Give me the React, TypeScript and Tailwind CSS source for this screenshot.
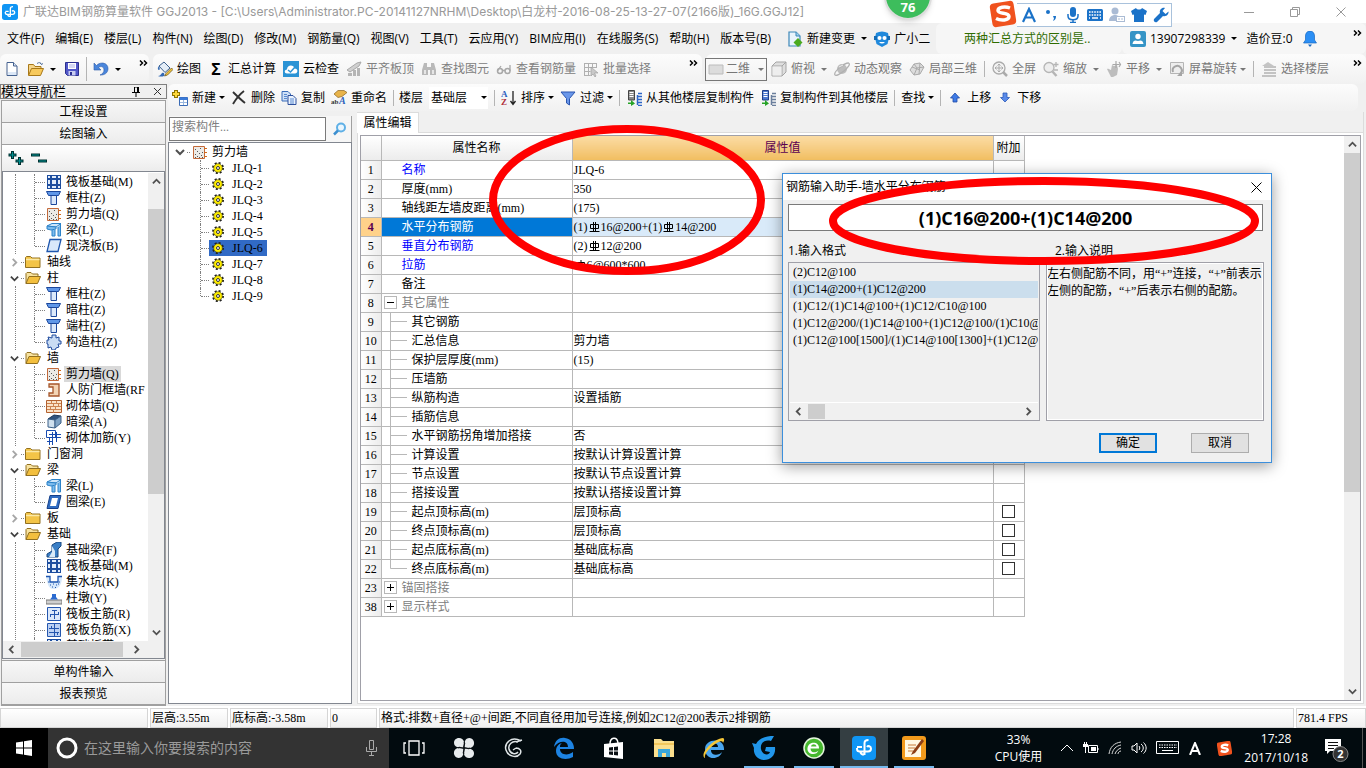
import React from 'react';

interface IconProps {
  name: string;
  size?: string;
}

interface Row {
  no: number;
  name: string;
  value?: string;
  kind?: 'link' | 'group' | 'child';
  open?: boolean;
  last?: boolean;
  check?: boolean;
}

interface TreeGroup {
  name: string;
  open: boolean;
  items: { icon: string; name: string; active?: boolean }[];
}

const UI = "font-['Open_Sans','Noto_Sans_CJK_SC',sans-serif]";
const SONG = "font-['Liberation_Serif','Noto_Sans_CJK_SC',serif]";

// 16x16 drawings for the bars and the trees
const icons: Record<string, React.ReactNode> = {
  doc: (
    <>
      <path d="M3 1.500h6.500L13 5v9.500H3z" fill="#fff" stroke="#44618f" />
      <path d="M9.500 1.500V5H13" fill="#dbe6f5" stroke="#44618f" />
      <path d="M4 11h8v3H4z" fill="#dce8f7" />
    </>
  ),
  open: (
    <>
      <path d="M.5 14V3.500h5l1.500 2h6V8" fill="#f5d58a" stroke="#a87818" />
      <path d="M.5 14.500 3.500 7.500h12l-3 7z" fill="#f7c95c" stroke="#a87818" />
      <path d="M9 2.500c2-1.500 4-1 4.500 1l1.500-1M13.500 3.500 12 2" fill="none" stroke="#53729d" />
    </>
  ),
  save: (
    <>
      <path d="M1.500 1.500h13v13h-11l-2-2z" fill="#5157c8" stroke="#2b2f8f" />
      <path d="M4 2h8v6H4z" fill="#fff" />
      <path d="M5 4h6M5 6h6" stroke="#a9afe8" />
      <path d="M4.500 10h7v4.500h-7z" fill="#c9cdf0" />
      <path d="M6 11h2v3H6z" fill="#2b2f8f" />
    </>
  ),
  undo: <path d="M1 2v7h7L5.500 6.500c3-2 5.500-.5 5.500 2.500 0 2.500-1.500 4-4 5 4.500.3 8-2 8-6.500C15 2 8 0 3.500 4.500z" fill="#4a86dc" stroke="#2c5aa8" strokeWidth=".6" />,
  bucket: (
    <>
      <path d="M2 5l5-4 6 6-5 4.500z" fill="#e4edf7" stroke="#3a5f8d" />
      <path d="M2 5C0 7 1 9 2 9s1-2 0-4" fill="#3a6fb5" />
      <path d="M14.500 7 9 12.500 7.500 15 10.500 14 16 8.500z" fill="#f2c23c" stroke="#5a4a1a" strokeWidth=".7" />
      <path d="M5 12c2-1 3 1 2 3-2 1-5 .5-6 0 2 0 3-2 4-3z" fill="#3369b5" />
    </>
  ),
  cloud: (
    <>
      <path d="M0 0h16v16H0z" fill="#2a93d5" />
      <path d="M4 12.500c-3 0-3-4 0-4 0-5 7-5 7.500-1 4 0 3.500 5 .5 5z" fill="#fff" />
      <path d="m5 9 2.500 2L12 6" fill="none" stroke="#2a93d5" strokeWidth="1.500" />
    </>
  ),
  slab: (
    <>
      <path d="M1 9 11 2l4-1-2 4-9 6z" fill="#d0d0d0" stroke="#a8a8a8" />
      <path d="M2 12h4v3H2zM7 9h3v6H7zM11 7h3v8h-3z" fill="#b5b5b5" />
    </>
  ),
  binocular: (
    <>
      <path d="M3 2h3v4h4V2h3l2 7v5H9V9H7v5H1V9z" fill="#b9b9b9" />
      <path d="M3 9h2v4H3zM11 9h2v4h-2z" fill="#e6e6e6" />
    </>
  ),
  glasses: (
    <>
      <circle cx="4" cy="10" r="2.500" fill="none" stroke="#a8a8a8" strokeWidth="1.500" />
      <circle cx="11.500" cy="10" r="2.500" fill="none" stroke="#a8a8a8" strokeWidth="1.500" />
      <path d="M6.500 9.500h2.500M1.500 10 5 5M14 10V4" stroke="#a8a8a8" strokeWidth="1.300" />
    </>
  ),
  batch: (
    <>
      <path d="M1.500 2.500h12M1.500 6.500h12M1.500 10.500h6M1.500 14.500h6M1.500 2v13M5.500 2v13M9.500 2v5M13.500 2v5" stroke="#b0b0b0" />
      <path d="M8 6v9l2-2 2 3 1-1-1.500-3H15z" fill="#c9c9c9" stroke="#999" strokeWidth=".6" />
    </>
  ),
  flat: <path d="M1 4h14v9H1z" fill="#dcdcdc" stroke="#bcbcbc" />,
  cube: (
    <>
      <path d="M1 5l4-4h10v10l-4 4H1z" fill="#dedede" stroke="#a5a5a5" />
      <path d="M1 5h10v10M11 5l4-4" fill="none" stroke="#a5a5a5" />
      <path d="M1.500 5.500h9v9h-9z" fill="#eee" />
    </>
  ),
  orbit: (
    <>
      <circle cx="8" cy="8" r="5" fill="#bdbdbd" />
      <path d="M1 14c-2-3 9-12 13.500-12 2.500 1-1 5-4 7.500C6 13 2 15.500 1 14z" fill="none" stroke="#b0b0b0" strokeWidth="1.300" />
      <path d="M5 6l4-2" stroke="#eee" />
    </>
  ),
  cube3: (
    <>
      <path d="m1 9 4-6 6-1 4 4-4 7-6 1z" fill="#ddd" stroke="#aaa" />
      <path d="m5 3 3 4-3 7M8 7l7-1M3 6l8 3M11 2l-1 11" fill="none" stroke="#aaa" />
    </>
  ),
  full: (
    <>
      <circle cx="7" cy="7" r="6" fill="#f3f3f3" stroke="#ababab" strokeWidth="1.300" />
      <path d="M7 3v8M3 7h8M5.500 4.500 7 3l1.500 1.500M5.500 9.500 7 11l1.500-1.500M4.500 5.500 3 7l1.500 1.500M9.500 5.500 11 7 9.500 8.500" fill="none" stroke="#ababab" />
      <path d="m11 11 4 4" stroke="#ababab" strokeWidth="2.500" />
    </>
  ),
  zoom: (
    <>
      <circle cx="6" cy="6.500" r="5" fill="#eee" stroke="#b5b5b5" strokeWidth="1.300" />
      <path d="m9.500 10.500 4 4.500" stroke="#b5b5b5" strokeWidth="2.500" />
      <path d="M13 1v5M10.500 3.500h5M11 9h4" stroke="#b5b5b5" strokeWidth="1.300" />
    </>
  ),
  pan: (
    <>
      <path d="M1 8c2-1 3 1 4 1l1-5 2 1 3-1 1 4-1 6-4 2H5z" fill="#bdbdbd" />
      <path d="M10 0v7M6.500 3.500h7M13 1l1.500 2.500L13 6" fill="none" stroke="#a8a8a8" strokeWidth="1.200" />
    </>
  ),
  rotate: (
    <>
      <path d="M1.500 1.500h13v11h-13z" fill="#eee" stroke="#b5b5b5" />
      <path d="M4 11a4.500 4.500 0 1 1 7 2" fill="none" stroke="#a5a5a5" strokeWidth="2" />
      <path d="M13 10v5H8z" fill="#a5a5a5" />
    </>
  ),
  floors: (
    <>
      <path d="M1 5 7 1l6 4z" fill="#c4c4c4" />
      <path d="M3 6h12M3 9h12M3 12h12M1 15h14" stroke="#b3b3b3" strokeWidth="1.700" />
    </>
  ),
  add: (
    <>
      <path d="M4 0v8M0 4h8" stroke="#8f7400" strokeWidth="4" />
      <path d="M4 1v6M1 4h6" stroke="#ffd83a" strokeWidth="2" />
      <path d="M7.500 7.500h8v8h-8z" fill="#fff" stroke="#3a6bb5" />
      <path d="M7.500 7.500h8v2.500h-8z" fill="#3a7ad8" />
      <path d="M8 12.500h7M11.500 10v5" stroke="#9ab8e0" />
    </>
  ),
  del: <path d="M2 2c3 3 7 7 12 11M13 1C9 4 5 9 2 14" fill="none" stroke="#333" strokeWidth="1.900" />,
  copy: (
    <>
      <path d="M1 1.500h6l2.500 2.500v7H1z" fill="#cfe0f7" stroke="#3b6cb8" />
      <path d="M7 5.500h5l3 3v6H7z" fill="#e8f1fd" stroke="#2c4f9c" />
      <path d="M3 4.500h3M3 6.500h3M3 8.500h3M9 9h4M9 11h4M9 13h4" stroke="#5a8ad0" />
    </>
  ),
  rename: (
    <>
      <path d="m3 4 4-3.500h6l3 2-5 4-4 1z" fill="#e8b34a" stroke="#8a6320" strokeWidth=".7" />
      <text x="0" y="14" fontSize="7" fontWeight="bold" fill="#333" fontFamily="Liberation Serif">ab</text>
      <text x="8" y="14" fontSize="10" fontStyle="italic" fontWeight="bold" fill="#2f62bb" fontFamily="Liberation Serif">A</text>
    </>
  ),
  sort: (
    <>
      <text x="0" y="7" fontSize="9" fontWeight="bold" fill="#2b5fc0" fontFamily="Liberation Serif">A</text>
      <text x="0" y="15" fontSize="9" fontWeight="bold" fill="#b0303a" fontFamily="Liberation Serif">Z</text>
      <path d="M12 1v13M9.500 11l2.500 3.500L14.500 11" fill="none" stroke="#222" strokeWidth="1.300" />
    </>
  ),
  filter: <path d="M1 2h14L9.500 8.500V15L6.500 13V8.500z" fill="#6a97ea" stroke="#2a55ae" />,
  fromFloor: (
    <>
      <path d="M2.500.5h6V10h-6z" fill="#888" stroke="#444" />
      <path d="M3.500 2.500h4M3.500 4.500h4M3.500 6.500h4" stroke="#fff" />
      <path d="M11.500 5v10M12 3.500h4M12 6.500h4M12 9.500h4M12 12.500h4M12 15.500h4" fill="none" stroke="#2d66c8" strokeWidth="1.500" />
      <path d="M2 12.500h3V10l4 3.500L5 16v-2H2z" fill="#27a327" />
    </>
  ),
  toFloor: (
    <>
      <path d="M2.500.5h6V10h-6z" fill="#4d79d1" stroke="#1e3f88" />
      <path d="M3.500 2.500h4M3.500 4.500h4M3.500 6.500h4" stroke="#fff" />
      <path d="M11.500 5v10M12 3.500h4M12 6.500h4M12 9.500h4M12 12.500h4M12 15.500h4" fill="none" stroke="#6b7f9d" strokeWidth="1.500" />
      <path d="M2 12.500h3V10l4 3.500L5 16v-2H2z" fill="#27a327" />
    </>
  ),
  up: <path d="M8 3 3.500 8H6v4h4V8h2.500z" fill="#3f7be6" stroke="#1e4aa5" strokeWidth=".8" />,
  down: <path d="M8 12 3.500 7.500H6V3h4v4.500h2.500z" fill="#5a8bea" stroke="#2c5ab8" strokeWidth=".8" />,
  change: (
    <>
      <path d="M2 1h7l4 4v10H2z" fill="#e9f4fc" stroke="#3c87b8" strokeWidth="1.200" />
      <path d="M9 1v4h4" fill="#9fd0ee" stroke="#3c87b8" />
      <path d="m11 7 4.500 4.500L11 16l-4.500-4.500z" fill="#4bab1e" />
    </>
  ),
  robot: (
    <>
      <path d="M2 2c4-2 8-2 12 0l1 5-1.500 6-5.500 3-5.500-3L1 7z" fill="#2089dc" />
      <path d="M0 5h3v4H0zM13 5h3v4h-3z" fill="#156cb5" />
      <circle cx="5.500" cy="7" r="2" fill="#fff" />
      <circle cx="10.500" cy="7" r="2" fill="#fff" />
      <path d="M5 11c2 2 4 2 6 0z" fill="#fff" />
    </>
  ),
  user: (
    <>
      <rect width="16" height="16" rx="2" fill="#3594c6" />
      <circle cx="8" cy="5.500" r="2.700" fill="#fff" />
      <path d="M2.500 13c.5-4 3-4 5.500-3 2.500-1 5-1 5.500 3z" fill="#fff" />
    </>
  ),
  bell: (
    <>
      <path d="M8 0c3 0 4.500 2.500 4.500 5v4l2 3h-13l2-3V5C3.500 2.500 5 0 8 0z" fill="#2b8ff5" stroke="#1767c0" strokeWidth=".7" />
      <path d="M6 13.500h4L8 16z" fill="#1767c0" />
    </>
  ),
  folder: (
    <>
      <path d="M.5 13.500v-10l1-1h4l1.500 1.500h8v9.500z" fill="#f3c447" stroke="#927020" />
      <path d="M1 5.500h13.500" stroke="#fbe9a8" strokeWidth="1.500" />
    </>
  ),
  folderOpen: (
    <>
      <path d="M1 13.500v-10l1-1h4l1.500 1.500h5.500V7" fill="#f8e3a0" stroke="#927020" />
      <path d="M1 13.500 4 6.500h11.500l-3 7z" fill="#f3bf3e" stroke="#927020" />
    </>
  ),
  raft: (
    <>
      <path d="M1 1h14v14H1z" fill="#1d4d9e" />
      <path d="M2 2h2v2H2zM6 2h4v2H6zM12 2h2v2h-2zM2 6h2v4H2zM12 6h2v4h-2zM2 12h2v2H2zM6 12h4v2H6zM12 12h2v2h-2zM6 6h4v4H6z" fill="#e2edfb" />
    </>
  ),
  column: (
    <>
      <path d="M.5 1.500h14l-2 4h-10z" fill="#5f97e8" stroke="#1b479c" />
      <path d="M5 5.500h5.500v9H5z" fill="#dbe9fb" stroke="#1b479c" />
    </>
  ),
  wall: (
    <>
      <path d="M1.500 2.500h11v12h-11z" fill="#eceae6" stroke="#c2693a" />
      <path d="M12 4.500h3M12 8.500h3M12 12.500h3" stroke="#d26a1c" />
      <path d="M3 5.500h1M8 4.500h1M5 7.500h1M10 8.500h1M3 10.500h1M7 9.500h1M9 11.500h1M5 12.500h1M10 13.500h1M3 13.500h1M7 13.500h1" stroke="#555" />
    </>
  ),
  beam: (
    <>
      <path d="M1 4l5-2.500h9L10 5z" fill="#cfe6fa" stroke="#2b82c9" />
      <path d="M1 4v3l4 1 5-1V5zM6 8v6h3V8M12 5v9h2.500V2" fill="#7dbbed" stroke="#2b82c9" />
    </>
  ),
  slabB: <path d="M4 1.500h11l-3 12H1z" fill="#d9e8fa" stroke="#1f57ae" strokeWidth="1.300" />,
  gear: <path d="M6 1h4v3l3-1v4h2v3h-3l1 3-3 1-1 2H6l-1-3-3 1V10H1V6h2L2 3l4 1z" fill="#c9dcf4" stroke="#1f4a9d" />,
  door: <path d="M3 2h10v12H3v-3h4V5H3z" fill="#f3d4b4" stroke="#a6562a" strokeWidth="1.300" />,
  brick: (
    <>
      <path d="M.5 2.500h15v12H.5z" fill="#fbe3c8" stroke="#b2612f" />
      <path d="M1 5.500h14M1 8.500h14M1 11.500h14M5.500 3v3M10.500 3v3M7.500 6v3M12.500 6v3M4.500 9v3M9.500 9v3M7.500 12v3" stroke="#cc8350" />
    </>
  ),
  hidden: (
    <>
      <path d="M2 5l6-4 7 1-6 4z" fill="#30547e" stroke="#1c3657" />
      <path d="M2 5l7 1v8l-7-1z" fill="#cfe0ee" stroke="#3c6188" />
      <path d="M9 6l6-4v7l-6 5z" fill="#7ea2c4" stroke="#3c6188" />
    </>
  ),
  rebar: <path d="M.5.5h9v7h-9zM3 4.500h12M3 7.500h12M6.500 2v13M10.500 2v10M3.500 8v7M1 11.500h6" fill="none" stroke="#184bb0" />,
  ring: (
    <>
      <path d="M4 1.500h11l-3 13H1z" fill="#2f6cc2" stroke="#143f8a" />
      <path d="M6 4h6l-2 8H4z" fill="#fff" />
    </>
  ),
  footing: (
    <>
      <path d="M1 15v-3l5-3V3l5-3h4v4l-3 3v8z" fill="#3b7fc6" stroke="#17477f" />
      <path d="M3 15l3-5V4l3 5v6z" fill="#d9eaf8" />
    </>
  ),
  pit: (
    <>
      <path d="M0 3h4v5h8V3h4c0 7-3 12-8 12S2 12 0 3z" fill="#d6e8fb" />
      <path d="M0 2.500h4V8h8V2.500h4" fill="none" stroke="#1c55b0" strokeWidth="1.300" />
      <path d="M2 8h1M4 11h1M7 10h1M10 11h1M6 13h1M9 13.500h1M13 8h1M12 10h1" stroke="#1c55b0" />
    </>
  ),
  pier: (
    <>
      <path d="M0 10h16v4H0z" fill="#cfcfcf" stroke="#777" />
      <path d="M4 9.500 6 7V4h4v3l2 2.500z" fill="#2b6bd0" />
    </>
  ),
  mainBar: (
    <>
      <path d="M1.500 1.500h13v13h-13z" fill="#dce9fb" stroke="#2456ae" />
      <path d="M8.500 4v9M4 8.500h9M6 4.500h5M4.500 8v3M12.500 9V6" stroke="#2456ae" />
    </>
  ),
  negBar: (
    <>
      <path d="M1.500 1.500h13v13h-13z" fill="#bcd1f3" stroke="#2456ae" />
      <path d="M8.500 2v12M3 6.500h10M3 10.500h10M5.500 4v3M11.500 10v3" stroke="#2456ae" />
    </>
  ),
  sun: (
    <>
      <circle cx="8" cy="8" r="5" fill="none" stroke="#222" strokeWidth="2" strokeDasharray="2 1.927" />
      <circle cx="8" cy="8" r="4.300" fill="#ffee00" stroke="#555200" strokeWidth=".6" />
      <circle cx="8" cy="8" r="1.500" fill="#fff" stroke="#333" />
    </>
  ),
};

const Icon: React.FC<IconProps> = ({ name, size = 'size-4' }) => (
  <svg viewBox="0 0 16 16" className={`${size} shrink-0`} aria-hidden="true">
    {icons[name]}
  </svg>
);

const Caret = () => (
  <svg viewBox="0 0 6 3" className="h-[3px] w-[6px] shrink-0" fill="currentColor" aria-hidden="true">
    <path d="M0 0h6L3 3z" />
  </svg>
);

const More = () => (
  <svg viewBox="0 0 9 6" className="h-[6px] w-[9px] shrink-0" fill="none" stroke="#000" strokeWidth="1.500" aria-hidden="true">
    <path d="m1 .5 2.500 2.500L1 5.500M5 .5 7.500 3 5 5.500" />
  </svg>
);

const Sep = () => <span className="h-4 w-px shrink-0 bg-[#b4b4b4]" />;

const Chevron = ({ d, className = 'size-[9px]', stroke = '#505050' }: { d: string; className?: string; stroke?: string }) => (
  <svg viewBox="0 0 10 10" className={`${className} shrink-0`} fill="none" stroke={stroke} strokeWidth="2" aria-hidden="true">
    <path d={d} />
  </svg>
);
const UP = 'M1 7l4-4 4 4';
const DOWN = 'M1 3l4 4 4-4';
const LEFT = 'M7 1L3 5l4 4';
const RIGHT = 'M3 1l4 4-4 4';

// button with an icon, used by all tool bars
const Tool = ({ icon, label, caret, wide }: { icon?: string; label: string; caret?: boolean; wide?: boolean }) => (
  <button className="flex shrink-0 items-center whitespace-nowrap">
    {icon && <span className="mr-1"><Icon name={icon} /></span>}
    {label}
    {caret && <span className={wide ? 'ml-[6px]' : 'ml-[3px]'}><Caret /></span>}
  </button>
);

const menus = ['文件(F)', '编辑(E)', '楼层(L)', '构件(N)', '绘图(D)', '修改(M)', '钢筋量(Q)', '视图(V)', '工具(T)', '云应用(Y)', 'BIM应用(I)', '在线服务(S)', '帮助(H)', '版本号(B)'];

const tree: TreeGroup[] = [
  {
    name: '', open: true, items: [
      { icon: 'raft', name: '筏板基础(M)' },
      { icon: 'column', name: '框柱(Z)' },
      { icon: 'wall', name: '剪力墙(Q)' },
      { icon: 'beam', name: '梁(L)' },
      { icon: 'slabB', name: '现浇板(B)' },
    ],
  },
  { name: '轴线', open: false, items: [] },
  {
    name: '柱', open: true, items: [
      { icon: 'column', name: '框柱(Z)' },
      { icon: 'column', name: '暗柱(Z)' },
      { icon: 'column', name: '端柱(Z)' },
      { icon: 'gear', name: '构造柱(Z)' },
    ],
  },
  {
    name: '墙', open: true, items: [
      { icon: 'wall', name: '剪力墙(Q)', active: true },
      { icon: 'door', name: '人防门框墙(RF' },
      { icon: 'brick', name: '砌体墙(Q)' },
      { icon: 'hidden', name: '暗梁(A)' },
      { icon: 'rebar', name: '砌体加筋(Y)' },
    ],
  },
  { name: '门窗洞', open: false, items: [] },
  {
    name: '梁', open: true, items: [
      { icon: 'beam', name: '梁(L)' },
      { icon: 'ring', name: '圈梁(E)' },
    ],
  },
  { name: '板', open: false, items: [] },
  {
    name: '基础', open: true, items: [
      { icon: 'footing', name: '基础梁(F)' },
      { icon: 'raft', name: '筏板基础(M)' },
      { icon: 'pit', name: '集水坑(K)' },
      { icon: 'pier', name: '柱墩(Y)' },
      { icon: 'mainBar', name: '筏板主筋(R)' },
      { icon: 'negBar', name: '筏板负筋(X)' },
      { icon: 'raft', name: '基础板带(W)' },
    ],
  },
];

const rows: Row[] = [
  { no: 1, name: '名称', value: 'JLQ-6', kind: 'link' },
  { no: 2, name: '厚度(mm)', value: '350' },
  { no: 3, name: '轴线距左墙皮距离(mm)', value: '(175)' },
  { no: 4, name: '水平分布钢筋', value: '(1)C16@200+(1)C14@200', kind: 'link' },
  { no: 5, name: '垂直分布钢筋', value: '(2)C12@200', kind: 'link' },
  { no: 6, name: '拉筋', value: 'A6@600*600', kind: 'link' },
  { no: 7, name: '备注' },
  { no: 8, name: '其它属性', kind: 'group', open: true },
  { no: 9, name: '其它钢筋', kind: 'child' },
  { no: 10, name: '汇总信息', value: '剪力墙', kind: 'child' },
  { no: 11, name: '保护层厚度(mm)', value: '(15)', kind: 'child' },
  { no: 12, name: '压墙筋', kind: 'child' },
  { no: 13, name: '纵筋构造', value: '设置插筋', kind: 'child' },
  { no: 14, name: '插筋信息', kind: 'child' },
  { no: 15, name: '水平钢筋拐角增加搭接', value: '否', kind: 'child' },
  { no: 16, name: '计算设置', value: '按默认计算设置计算', kind: 'child' },
  { no: 17, name: '节点设置', value: '按默认节点设置计算', kind: 'child' },
  { no: 18, name: '搭接设置', value: '按默认搭接设置计算', kind: 'child' },
  { no: 19, name: '起点顶标高(m)', value: '层顶标高', kind: 'child', check: true },
  { no: 20, name: '终点顶标高(m)', value: '层顶标高', kind: 'child', check: true },
  { no: 21, name: '起点底标高(m)', value: '基础底标高', kind: 'child', check: true },
  { no: 22, name: '终点底标高(m)', value: '基础底标高', kind: 'child', check: true, last: true },
  { no: 23, name: '锚固搭接', kind: 'group' },
  { no: 38, name: '显示样式', kind: 'group' },
];

// rebar grade sign: C is drawn with a foot line, A without
const Grade = ({ foot }: { foot: boolean }) => (
  <svg viewBox="0 0 13 12" className="inline h-3 w-[13px] align-[-2px]" fill="none" stroke="#000" aria-hidden="true">
    <path d={foot ? 'M2.500 3.500h8v4h-8zM5.500 1v9M7.500 1v9M1.500 10.500h10' : 'M3.500 3.500h7v4h-7zM7 1v10'} />
  </svg>
);

const RebarText = ({ text }: { text: string }) => (
  <>
    {text.split(/([AC])(?=\d)/).map((part, i) =>
      part === 'C' || part === 'A' ? <Grade key={i} foot={part === 'C'} /> : <span key={i}>{part}</span>
    )}
  </>
);

const NameCell = ({ row }: { row: Row }) => {
  if (row.kind === 'group') {
    return (
      <div className="flex h-[18px] items-center text-[#808080]">
        <button className="mr-[5px] ml-[2px] flex size-[13px] items-center justify-center border border-[#b8b8b8]" aria-label={row.name}>
          <svg viewBox="0 0 7 7" className="size-[7px]" stroke="#000" aria-hidden="true">
            <path d={row.open ? 'M0 3.500h7' : 'M0 3.500h7M3.500 0v7'} />
          </svg>
        </button>
        {row.name}
      </div>
    );
  }
  if (row.kind === 'child') {
    return (
      <div className="flex h-[18px] items-center">
        <svg viewBox="0 0 30 19" className="h-[19px] w-[30px] shrink-0" stroke="#b8b8b8" aria-hidden="true">
          <path d={row.last ? 'M8.500 0v9.500H25' : 'M8.500 0v19M8.500 9.500H25'} fill="none" />
        </svg>
        {row.name}
      </div>
    );
  }
  return <div className="h-[18px] pl-5">{row.name}</div>;
};

const PropertyTable = () => (
  <table className="w-[663px] table-fixed border-collapse bg-white text-xs">
    <colgroup>
      <col className="w-[20px]" />
      <col className="w-[191px]" />
      <col className="w-[421px]" />
      <col className="w-[31px]" />
    </colgroup>
    <thead>
      <tr className="h-6 bg-linear-to-b from-white to-[#ececec]">
        <th className="border-r border-b border-[#b8b8b8] p-0" aria-label="#"></th>
        <th className="border-r border-b border-[#b8b8b8] p-0 font-normal">属性名称</th>
        <th className="border-r border-b border-[#b8b8b8] bg-linear-to-b from-[#fbdca4] to-[#f1be60] p-0 font-normal text-[#5a0050]">属性值</th>
        <th className="border-r border-b border-[#b8b8b8] p-0 font-normal">附加</th>
      </tr>
    </thead>
    <tbody>
      {rows.map((row) => {
        const active = row.no === 4;
        return (
          <tr key={row.no} className="h-[19px] leading-[18px]">
            <td className={`border border-l-0 border-[#b8b8b8] p-0 text-center ${active ? 'bg-[#ffd28a] font-bold text-[#5a0050]' : 'bg-linear-to-r from-white to-[#ececec]'}`}>{row.no}</td>
            <td className={`border border-[#b8b8b8] p-0 whitespace-nowrap ${active ? 'bg-[#0078d7] text-white' : row.kind === 'link' ? 'text-[#0000ff]' : ''}`}>
              <NameCell row={row} />
            </td>
            <td className={`border border-[#b8b8b8] p-0 pl-px whitespace-nowrap ${active ? 'bg-[#d9eaf9]' : ''}`}>
              {row.value && <RebarText text={row.value} />}
            </td>
            <td className="border border-[#b8b8b8] p-0">
              {row.check && <input type="checkbox" aria-label={row.name} className="mx-auto block size-[13px] appearance-none border border-[#333] bg-white" />}
            </td>
          </tr>
        );
      })}
    </tbody>
  </table>
);

const ModuleTree = () => (
  <ul className="min-w-0 flex-1 overflow-hidden bg-white pt-px text-xs leading-4">
    {tree.map((group, g) => (
      <li key={g}>
        {group.name && (
          <div className="flex h-4 items-center">
            <span className="ml-[6px] flex w-[11px] justify-center">
              <Chevron d={group.open ? DOWN : RIGHT} stroke={group.open ? '#404040' : '#a6a6a6'} />
            </span>
            <span className="mx-px w-[3px] border-t border-dotted border-[#808080]" />
            <Icon name={group.open ? 'folderOpen' : 'folder'} />
            <span className="ml-[6px]">{group.name}</span>
          </div>
        )}
        {group.items.length > 0 && (
          <ul className="ml-3 border-l border-dotted border-[#808080] pl-[18px]">
            {group.items.map((item, i) => (
              <li key={i} className="flex h-4 items-center whitespace-nowrap">
                <span className={`w-px self-start border-l border-dotted border-[#808080] ${i === group.items.length - 1 && g < 7 ? 'h-2' : 'h-4'}`} />
                <span className="mr-px w-[10px] border-t border-dotted border-[#808080]" />
                <Icon name={item.icon} />
                <span className={`ml-[2px] h-4 px-[2px] ${item.active ? 'bg-[#d9d9d9]' : ''}`}>{item.name}</span>
              </li>
            ))}
          </ul>
        )}
      </li>
    ))}
  </ul>
);

const NavButton = ({ label }: { label: string }) => (
  <button className="h-[22px] w-full shrink-0 border-b border-[#a0a0a0] bg-linear-to-b from-[#f7f7f7] to-[#ececec] text-center text-xs">{label}</button>
);

const ModulePanel = () => (
  <aside className={`flex w-[167px] shrink-0 flex-col bg-[#f0f0f0] text-xs ${SONG}`}>
    <div className="flex h-[15px] shrink-0 items-center border border-[#808080] text-[13px] leading-[13px]">
      模块导航栏
      <svg viewBox="0 0 10 10" className="ml-auto size-[10px]" stroke="#000" fill="none" aria-hidden="true">
        <path d="M3.500 0h4v5.500h-4zM1 5.500h8M5 6v4M6.500 0v5" />
      </svg>
      <svg viewBox="0 0 9 9" className="mr-1 ml-3 size-[9px]" stroke="#333" aria-hidden="true">
        <path d="m1 1 7 7M8 1 1 8" />
      </svg>
    </div>
    <div className="mx-px mt-px flex min-h-0 flex-1 flex-col border border-[#a0a0a0]">
      <NavButton label="工程设置" />
      <NavButton label="绘图输入" />
      <div className="flex h-[26px] shrink-0 items-center bg-linear-to-b from-white to-[#ececec] pl-[6px]">
        <svg viewBox="0 0 40 16" className="h-4 w-10" aria-hidden="true">
          <path d="M4.500 1v8M.5 5h8M11.500 7v8M7.500 11h8M23 5h9M30 11h9" stroke="#003030" strokeWidth="3" fill="none" />
          <path d="M4.500 2v6M1.500 5h6M11.500 8v6M8.500 11h6M24 5h7M31 11h7" stroke="#009090" strokeWidth="1" fill="none" />
        </svg>
      </div>
      <div className="flex min-h-0 flex-1 flex-col border-x border-y border-[#828790]">
        <div className="flex min-h-0 flex-1 overflow-hidden border-t border-white">
          <ModuleTree />
          <div className="flex w-4 shrink-0 flex-col items-center bg-[#f0f0f0]">
            <span className="flex h-9 w-full justify-center pt-1"><Chevron d={UP} /></span>
            <span className="w-full grow-[292] bg-[#cdcdcd]" />
            <span className="flex w-full grow-[138] items-end justify-center pb-1"><Chevron d={DOWN} /></span>
          </div>
        </div>
        <div className="flex h-[17px] shrink-0 items-center bg-[#f0f0f0] pl-1">
          <Chevron d={LEFT} />
          <span className="mx-[5px] h-[15px] w-[102px] bg-[#cdcdcd]" />
          <span className="ml-1"><Chevron d={RIGHT} /></span>
        </div>
      </div>
      <div className="mt-px flex shrink-0 flex-col border-t border-[#a0a0a0]">
        <NavButton label="单构件输入" />
        <NavButton label="报表预览" />
      </div>
    </div>
  </aside>
);

const ComponentPanel = () => (
  <section className={`flex w-[184px] shrink-0 flex-col text-xs ${SONG}`}>
    <div className="mt-1 flex h-[26px] shrink-0 items-center gap-[6px] border-r border-[#a0a0a0] bg-[#f6f6f6] pl-[1px]">
      <input type="text" placeholder="搜索构件..." aria-label="搜索构件" className="h-[24px] w-[157px] border border-[#7a7a7a] bg-white px-[2px] pb-1 placeholder:text-[#808080]" />
      <button aria-label="搜索" className="flex size-4 items-center justify-center">
        <svg viewBox="0 0 14 14" className="size-[14px]" fill="none" aria-hidden="true">
          <circle cx="8" cy="5.500" r="4" stroke="#5fb0e6" strokeWidth="2" fill="#eaf6fe" />
          <path d="m5 8.500-4 4" stroke="#3c8fd0" strokeWidth="2.500" />
        </svg>
      </button>
    </div>
    <ul className="flex-1 border border-[#828790] bg-white pt-px leading-4">
      <li>
        <div className="flex h-4 items-center">
          <span className="ml-[6px]"><Chevron d={DOWN} className="size-[10px]" /></span>
          <span className="mx-[2px] w-[3px] border-t border-dotted border-[#808080]" />
          <Icon name="wall" />
          <span className="ml-[4px]">剪力墙</span>
        </div>
        <ul className="ml-[31px]">
          {[1, 2, 3, 4, 5, 6, 7, 8, 9].map((n) => (
            <li key={n} className="flex h-4 items-center">
              <span className={`w-px self-start border-l border-dotted border-[#808080] ${n === 9 ? 'h-2' : 'h-4'}`} />
              <span className="w-2 border-t border-dotted border-[#808080]" />
              <span className={`flex h-4 items-center pr-1 pl-px ${n === 6 ? 'bg-[#316ac5]' : ''}`}>
                <Icon name="sun" />
                <span className="ml-[6px]">JLQ-{n}</span>
              </span>
            </li>
          ))}
        </ul>
      </li>
    </ul>
  </section>
);

const PropertyPanel = () => (
  <section className={`ml-[5px] flex min-w-0 flex-1 flex-col pr-[2px] text-xs ${SONG}`}>
    <div className="flex h-[21px] shrink-0 border-r border-[#dcdcdc]">
      <button className="w-[62px] border-t border-r border-[#dcdcdc] bg-white leading-5">属性编辑</button>
      <span className="flex-1 border-b border-[#dcdcdc]" />
    </div>
    <div className="min-h-0 flex-1 border-x border-b border-[#dcdcdc] bg-white p-[2px]">
      <div className="flex h-full border border-[#a0a0a8]">
        <div className="min-w-0 flex-1 overflow-hidden">
          <PropertyTable />
        </div>
        <div className="flex w-4 shrink-0 flex-col bg-[#f0f0f0]">
          <span className="flex h-[17px] items-center justify-center"><Chevron d={UP} /></span>
          <span className="grow-[340] bg-[#cdcdcd]" />
          <span className="flex grow-[196] items-end justify-center pb-1"><Chevron d={DOWN} /></span>
        </div>
      </div>
    </div>
  </section>
);

const formats = ['(2)C12@100', '(1)C14@200+(1)C12@200', '(1)C12/(1)C14@100+(1)C12/C10@100', '(1)C12@200/(1)C14@100+(1)C12@100/(1)C10@200', '(1)C12@100[1500]/(1)C14@100[1300]+(1)C12@100'];

const RebarDialog = () => (
  <div role="dialog" aria-label="钢筋输入助手" className={`absolute top-[173px] left-[782px] w-[490px] border border-[#3c8fdc] bg-[#f0f0f0] text-xs shadow-[0_3px_14px_rgba(0,0,0,0.4)] ${SONG}`}>
    <div className={`flex h-[26px] items-center bg-white pr-[9px] pl-[3px] ${UI}`}>
      钢筋输入助手-墙水平分布钢筋
      <button className="ml-auto" aria-label="关闭">
        <svg viewBox="0 0 11 11" className="size-[11px]" stroke="#000" aria-hidden="true">
          <path d="M.5.5l10 10M10.500.5l-10 10" />
        </svg>
      </button>
    </div>
    <div className="px-[5px] pt-1 pb-[9px]">
      <input aria-label="钢筋" defaultValue="(1)C16@200+(1)C14@200" className={`block h-[27px] w-[475px] border border-[#7a7a7a] bg-white text-center text-lg font-bold ${UI}`} />
      <div className={`mt-[11px] mb-[2px] flex h-[18px] leading-[18px] ${UI}`}>
        <span className="w-[267px]">1.输入格式</span>
        <span>2.输入说明</span>
      </div>
      <div className="flex h-[159px] gap-[6px]">
        <div className="flex w-[252px] shrink-0 flex-col border border-[#a0a0a8] p-px">
          <ul className="flex-1 overflow-hidden leading-[17px]">
            {formats.map((f, i) => (
              <li key={f} className={`h-[17px] overflow-hidden pl-[3px] whitespace-nowrap ${i === 1 ? 'bg-[#cbdeed]' : ''}`}>{f}</li>
            ))}
          </ul>
          <div className="flex h-[17px] shrink-0 items-center border-t border-white pr-[5px] pl-1">
            <Chevron d={LEFT} />
            <span className="ml-[5px] h-[15px] w-[17px] bg-[#cdcdcd]" />
            <span className="ml-auto"><Chevron d={RIGHT} /></span>
          </div>
        </div>
        <p className="w-[218px] shrink-0 border border-[#a0a0a8] pt-[3px] leading-[17px] outline -outline-offset-2 outline-white">左右侧配筋不同，用“+”连接，“+”前表示左侧的配筋，“+”后表示右侧的配筋。</p>
      </div>
      <div className="mt-3 flex justify-end gap-[34px] pr-[17px]">
        <button className="h-5 w-[58px] border-2 border-[#0078d7] bg-[#e1e1e1]">确定</button>
        <button className="h-5 w-[58px] border border-[#adadad] bg-[#e1e1e1]">取消</button>
      </div>
    </div>
  </div>
);

const SogouBar = () => (
  <div className="absolute top-0 left-[989px] flex items-center">
    <svg viewBox="0 0 28 28" className="z-10 size-7" aria-hidden="true">
      <rect x="2" y="2" width="24" height="24" rx="4" fill="#f0521e" transform="rotate(-9 14 14)" />
      <path d="M21 8c-5-2-12-1-12 2.500 0 4 11 1.500 11 6 0 4-8 4.500-13 2" fill="none" stroke="#fff" strokeWidth="3.500" />
    </svg>
    <div className="mt-[2px] flex h-6 items-center gap-[6px] border border-l-0 border-[#a9c2dc] bg-white pr-[2px] pl-1 text-[#1b72c8]">
      <svg viewBox="0 0 16 16" className="size-4" fill="none" stroke="currentColor" strokeWidth="2.200" aria-hidden="true"><path d="M2 15 8 2l6 13M4.500 10.500h7" /></svg>
      <svg viewBox="0 0 16 16" className="size-4" fill="currentColor" aria-hidden="true"><circle cx="5" cy="5" r="2" /><path d="M10 9h3c0 3-1 4-3 5l1-2.500z" /></svg>
      <svg viewBox="0 0 16 16" className="size-4" fill="currentColor" aria-hidden="true"><rect x="5" y="0" width="6" height="10" rx="3" /><path d="M3 7v2c0 5 10 5 10 0V7M8 13v3M5 15.500h6" fill="none" stroke="currentColor" strokeWidth="1.500" /></svg>
      <svg viewBox="0 0 16 16" className="size-4" aria-hidden="true"><rect y="2" width="16" height="12" rx="1.500" fill="currentColor" /><path d="M2 5h12M2 8h12M2 11h1M13 11h1" stroke="#fff" strokeWidth="1.500" strokeDasharray="1.600 1" /><path d="M5 11h6" stroke="#fff" strokeWidth="1.500" /></svg>
      <svg viewBox="0 0 16 16" className="size-4 text-[#aabbd4]" fill="currentColor" aria-hidden="true"><circle cx="6" cy="4" r="3.500" /><path d="M0 14c0-8 12-8 12 0z" /><rect x="7.500" y="9.500" width="8" height="5" fill="#fff" stroke="currentColor" /><path d="M10 11v2M13 11v2" stroke="currentColor" /></svg>
      <svg viewBox="0 0 16 16" className="size-4" fill="currentColor" aria-hidden="true"><path d="M5 1c1 2 5 2 6 0l5 3-1.500 4L13 7.500V15H3V7.500L1.500 8 0 4z" /></svg>
      <svg viewBox="0 0 16 16" className="size-4" fill="currentColor" aria-hidden="true"><path d="M15.500 4.500 12.500 7l-3-3L12 1C9 0 6 3 7 6L1 12c-1 2 1 4 3 3l6-6c3 1 6-1.500 5.500-4.500z" /></svg>
    </div>
  </div>
);

const taskApps: { name: string; art: React.ReactNode; run?: boolean; active?: boolean }[] = [
  { name: '任务视图', art: <path d="M7 5h10v14H7zM4 7H2v10h2M20 7h2v10h-2" fill="none" stroke="#fff" strokeWidth="1.300" /> },
  {
    name: '四叶草', art: (
      <g fill="#e8ecee"><path d="M11.500 11.500C6 12 2 11 2 6.500 2 1 11 0 12 6z" /><path d="M12.500 11.500C12 6 13 2 17.500 2 23 2 24 11 18 12z" /><path d="M12.500 12.500c5.500-.5 9.500.5 9.500 5 0 5.500-9 6.500-10 .5z" /><path d="M11.500 12.500c.5 5.500-.5 9.500-5 9.500C1 22 0 13 6 12z" /><path d="M12 6c2 2-1 4 0 6s-2 4 0 6M6 12c2-2 4 1 6 0s4 2 6 0" stroke="#0a1014" strokeWidth="1.300" fill="none" /></g>
    ),
  },
  { name: '搜狗', art: <path d="M19 5C9-1 2 8 4 14c2 7 11 8 14 4 2-3 0-6-4-6M16 6c-6-2-10 3-9 7 1 5 7 6 9 3M14 12l-3 2M20 4l-6 2" fill="none" stroke="#dfe5e7" strokeWidth="1.500" /> },
  { name: 'Edge', art: <path d="M2 11C3 4 8 1 13 2c6 1 9 5 9 11H8c0 6 8 7 13 3v5C14 25 4 23 4 15c0-4 2-7 6-8-2 1-2 3-2 4h8c0-7-9-7-14 0z" fill="#1d83e2" /> },
  { name: '应用商店', art: <><path d="M2 8l19-2v17L2 21z" fill="#fff" /><path d="M8 8c0-7 7-8 8-1" fill="none" stroke="#fff" strokeWidth="1.500" /><path d="M7 11.500l4-.5v3.500H7zM12 11l4-.5v4h-4zM7 15.500h4V19l-4-.5zM12 15.500h4v4l-4-.5z" fill="#0a1014" /></> },
  { name: '文件资源管理器', art: <><path d="M2 3h7l2 2h11v16H2z" fill="#fbdf8d" /><path d="M2 7h20v2H2z" fill="#f2c75c" /><path d="M6 21v-8h12v8h-4v-4h-4v4z" fill="#3ba7dc" /></> },
  { name: 'Internet Explorer', art: <><path d="M22 14H9c0 6 8 6 11 2-2 8-17 9-17-3C3 2 23 1 22 14zM9 11h7c0-5-7-5-7 0z" fill="#4aa5ee" /><path d="M3 22C-3 19 10 3 21 2c2 1 1 3 0 5 0-7-20 8-18 15z" fill="#f6c739" /></> },
  { name: '浏览器', run: true, art: <path d="M22 0 19 5C12 3 8 8 9 13c1 6 8 7 9 3l-5-1 1-4h9c1 8-4 13-11 13C5 24 1 18 2 12L0 7l4 1C7 2 14 0 22 0z" fill="#2196ea" /> },
  { name: '360', run: true, art: <><circle cx="12" cy="12" r="10" fill="#46b82e" stroke="#e4f5dc" strokeWidth="1.500" /><path d="M17 12.500H8.500c0 5 6 4.500 8 2-2 6-12 4-11-2.500C6.500 5 17.500 5 17 12.500zM9 10.500h5.500c-.5-3-5-3-5.500 0z" fill="#fff" /></> },
  { name: 'GGJ2013', run: true, active: true, art: <><rect width="24" height="24" rx="4" fill="#0f95f4" /><path d="M12.500 19V7c0-2 1-3 4-3M5 12v1c0 2 1 2.500 3 2.500h8c2 0 3-1 3-3 0-2.500-3-3-4-1.500M5 11h5M8.500 15.500c0 3 4 4.500 4 1" fill="none" stroke="#fff" strokeWidth="2" /></> },
  { name: '记事本', run: true, art: <><rect width="24" height="24" rx="3" fill="#f29a1c" /><path d="M3 4h16v17H3z" fill="#fff8e4" /><path d="M6 9h8M6 12h7M6 15h5" stroke="#c77a3a" /><path d="M20 3 11 15l-2 4 4-2 9-12z" fill="#8d3e16" /></> },
];

const Taskbar = () => (
  <footer className={`flex h-10 shrink-0 items-center bg-[#020b0f] text-xs text-white ${UI}`}>
    <button className="flex h-full w-12 shrink-0 items-center justify-center bg-black" aria-label="开始">
      <svg viewBox="0 0 16 16" className="size-4" fill="#fff" aria-hidden="true"><path d="M0 2.500 7 1.500v6H0zM8 1.300 16 0v7.500H8zM0 8.500h7v6l-7-1zM8 8.500h8V16l-8-1.300z" /></svg>
    </button>
    <div className="flex h-full w-[341px] shrink-0 items-center bg-[#333] pr-3 pl-2">
      <svg viewBox="0 0 22 22" className="size-[22px]" fill="none" aria-hidden="true"><circle cx="11" cy="11" r="9" stroke="#fff" strokeWidth="3" /></svg>
      <input aria-label="搜索" placeholder="在这里输入你要搜索的内容" className="ml-[6px] min-w-0 flex-1 text-sm placeholder:text-[#9a9a9a]" />
      <svg viewBox="0 0 11 16" className="h-4 w-[11px]" fill="none" stroke="#aaa" aria-hidden="true"><path d="M3.500.5h4v9h-4zM.5 7v4.500h10V7M5.500 12v3.500M3 15.500h5" /></svg>
    </div>
    <nav className="ml-px flex h-full gap-[2px]">
      {taskApps.map((app) => (
        <button key={app.name} aria-label={app.name} className={`flex h-full w-12 flex-col items-center pt-2 ${app.active ? 'bg-[#343e42]' : ''}`}>
          <svg viewBox="0 0 24 24" className="size-6" aria-hidden="true">{app.art}</svg>
          {app.run && <span className={`mt-auto h-[2px] bg-[#76b9ed] ${app.active ? 'w-12' : 'w-10'}`} />}
        </button>
      ))}
    </nav>
    <div className="mr-[18px] ml-auto text-center leading-[17px]">
      <div>33%</div>
      <div>CPU使用</div>
    </div>
    <div className="flex items-center gap-[9px]">
      <svg viewBox="0 0 14 8" className="h-2 w-[14px]" fill="none" stroke="#fff" aria-hidden="true"><path d="M1 7l6-6 6 6" /></svg>
      <svg viewBox="0 0 16 12" className="h-3 w-4" aria-hidden="true"><path d="M5.500 3.500h9v7h-9zM15 6v2" fill="none" stroke="#fff" /><path d="M8 5h5v4H8zM0 2h5v3H0zM1 0h1v2H1zM3 0h1v2H3zM2 5h1v6H2z" fill="#fff" /></svg>
      <svg viewBox="0 0 14 14" className="size-[14px]" fill="none" stroke="#d8d8d8" aria-hidden="true"><path d="M1 13C2 6 6 2 13 1M4 13c1-5 4-8 9-9M7 13c1-3 3-5 6-6M10 13c0-1 1-3 3-3" /></svg>
      <svg viewBox="0 0 16 14" className="h-[14px] w-4" fill="none" stroke="#fff" aria-hidden="true"><path d="M1 5h2l3-3v10L3 9H1zM8 5c1 1 1 3 0 4M10 3c3 2 3 6 0 8M12.500 1.500c3.500 3 3.500 8 0 11" /></svg>
      <svg viewBox="0 0 24 14" className="h-[14px] w-6" fill="none" stroke="#fff" aria-hidden="true"><path d="M.5.5h22v12H.5z" /><path d="M3 4h18M3 6.500h18" strokeDasharray="1.500 1" /><path d="M6 9.500h11" /></svg>
      <svg viewBox="0 0 12 13" className="h-[13px] w-3" fill="none" stroke="#fff" strokeWidth="2" aria-hidden="true"><path d="M1 13 6 1l5 12M3 9h6" /></svg>
    </div>
    <svg viewBox="0 0 28 28" className="ml-4 size-[15px] shrink-0" aria-hidden="true">
      <rect x="1" y="1" width="26" height="26" rx="4" fill="#f0521e" transform="rotate(-9 14 14)" />
      <path d="M21 8c-5-2-12-1-12 2.500 0 4 11 1.500 11 6 0 4-8 4.500-13 2" fill="none" stroke="#fff" strokeWidth="4.500" />
    </svg>
    <div className="ml-3 text-center leading-[19px]">
      <div>17:28</div>
      <div>2017/10/18</div>
    </div>
    <div className="ml-4 flex h-full items-center border-r border-[#555]">
      <svg viewBox="0 0 26 26" className="mt-1 mr-3 size-[26px]" aria-hidden="true">
        <path d="M1 2h16v12H6l-3 3v-3H1z" fill="#fff" />
        <path d="M4 5.500h10M4 8.500h10M4 11.500h6" stroke="#111" />
        <circle cx="16.500" cy="17" r="7.500" fill="#333" stroke="#888" />
        <text x="16.500" y="21" fontSize="11" fontWeight="bold" fill="#fff" textAnchor="middle">2</text>
      </svg>
    </div>
    <span className="w-[3px]" />
  </footer>
);

const BAR = 'rounded-md bg-linear-to-b from-[#fcfcfc] to-[#f1f1f1]';
const CELL = 'border border-[#d5d5d5] bg-linear-to-b from-white to-[#f0f0f0] pl-px leading-[18px] whitespace-nowrap';

const App: React.FC = () => {
  return (
    <div className={`relative flex h-screen flex-col overflow-hidden bg-[#f0f0f0] text-xs text-black ${UI}`}>
      <header className="flex h-[23px] shrink-0 items-center bg-white pl-[2px]">
        <svg viewBox="0 0 24 24" className="size-4" aria-hidden="true">{taskApps[9].art}</svg>
        <h1 className="ml-[5px] font-['Inter','Noto_Sans_CJK_SC',sans-serif] text-xs whitespace-nowrap text-[#999]">广联达BIM钢筋算量软件 GGJ2013 - [C:\Users\Administrator.PC-20141127NRHM\Desktop\白龙村-2016-08-25-13-27-07(2166版)_16G.GGJ12]</h1>
        <div className="mr-5 ml-auto flex gap-9">
          {['M0 5.500h10', 'M.5 2.500h7v7h-7zM2.500 2V.5h7v7H8', 'M.5.5l9 9M9.500.5l-9 9'].map((d) => (
            <svg key={d} viewBox="0 0 10 10" className="size-[10px]" fill="none" stroke="#999" aria-hidden="true"><path d={d} /></svg>
          ))}
        </div>
      </header>

      <nav className="flex h-[31px] shrink-0 items-center pl-[7px]">
        <div className="flex gap-[11px]">
          {menus.map((m) => (
            <button key={m} className="whitespace-nowrap">{m}</button>
          ))}
        </div>
        <div className="ml-4 flex gap-[7px]">
          <Tool icon="change" label="新建变更" caret wide />
          <Tool icon="robot" label="广小二" />
        </div>
        <div className="ml-auto flex h-full w-[430px] shrink-0 items-center">
          <a href="#tips" className="flex h-full w-[186px] items-center rounded-md bg-[#f6f6f6] pl-7 text-[#2f6c00]">两种汇总方式的区别是..</a>
          <div className="flex h-full flex-1 items-center gap-[9px] rounded-md bg-[#f6f6f6] pl-2">
            <Tool icon="user" label="13907298339" caret wide />
            <button>造价豆:0</button>
            <Icon name="bell" />
            <span className="mr-1 mb-3 ml-auto"><More /></span>
          </div>
        </div>
      </nav>

      <div className="flex h-[30px] shrink-0 gap-1">
        <div className={`flex w-[149px] shrink-0 items-center pl-1 ${BAR}`}>
          <Icon name="doc" />
          <span className="ml-2"><Icon name="open" /></span>
          <span className="mr-2 ml-[6px]"><Caret /></span>
          <Icon name="save" />
          <span className="mx-[6px] h-6 w-px bg-[#b4b4b4]" />
          <Icon name="undo" />
          <span className="ml-[6px]"><Caret /></span>
          <span className="mb-3 ml-auto mr-px"><More /></span>
        </div>
        <div className={`flex w-[549px] shrink-0 items-center gap-[7px] pl-1 ${BAR}`}>
          <Tool icon="bucket" label="绘图" />
          <button className="flex items-center"><span className="mr-1 w-4 text-center text-base leading-4 font-bold">Σ</span>汇总计算</button>
          <Tool icon="cloud" label="云检查" />
          <div className="flex gap-[7px] text-[#808080]">
            <Tool icon="slab" label="平齐板顶" />
            <Tool icon="binocular" label="查找图元" />
            <Tool icon="glasses" label="查看钢筋量" />
            <Tool icon="batch" label="批量选择" />
          </div>
          <span className="mr-1 mb-3 ml-auto"><More /></span>
        </div>
        <div className={`flex min-w-0 flex-1 items-center gap-[7px] text-[#777] ${BAR}`}>
          <div className="-ml-px -mr-[3px] flex h-[23px] w-[62px] shrink-0 items-center border border-[#777] pl-[2px]">
            <Icon name="flat" />
            <select aria-label="视图" className="ml-[2px] w-8 shrink-0 appearance-none"><option>二维</option></select>
            <Caret />
          </div>
          <Tool icon="cube" label="俯视" caret wide />
          <Tool icon="orbit" label="动态观察" />
          <Tool icon="cube3" label="局部三维" />
          <Sep />
          <Tool icon="full" label="全屏" />
          <Tool icon="zoom" label="缩放" caret wide />
          <Tool icon="pan" label="平移" caret wide />
          <Tool icon="rotate" label="屏幕旋转" caret />
          <Sep />
          <Tool icon="floors" label="选择楼层" />
          <span className="mr-1 mb-3 ml-auto"><More /></span>
        </div>
      </div>

      <main className="flex min-h-0 flex-1">
        <ModulePanel />
        <div className="ml-px flex min-w-0 flex-1 flex-col">
          <div className={`mr-2 flex h-[27px] shrink-0 items-center gap-[6px] pl-1 ${BAR}`}>
            <Tool icon="add" label="新建" caret />
            <Tool icon="del" label="删除" />
            <Tool icon="copy" label="复制" />
            <Tool icon="rename" label="重命名" />
            <Sep />
            <label htmlFor="floor" className="-ml-px shrink-0">楼层</label>
            <div className="flex h-[22px] w-[59px] shrink-0 items-center bg-white pl-[2px]">
              <select id="floor" className="w-[50px] shrink-0 appearance-none"><option>基础层</option></select>
              <Caret />
            </div>
            <Sep />
            <Tool icon="sort" label="排序" caret />
            <Tool icon="filter" label="过滤" caret />
            <Sep />
            <Tool icon="fromFloor" label="从其他楼层复制构件" />
            <Tool icon="toFloor" label="复制构件到其他楼层" />
            <Sep />
            <Tool label="查找" caret />
            <Sep />
            <Tool icon="up" label="上移" />
            <Tool icon="down" label="下移" />
          </div>
          <div className="flex min-h-0 flex-1 pt-px pb-[2px]">
            <ComponentPanel />
            <PropertyPanel />
          </div>
        </div>
      </main>

      <div className={`flex h-[22px] shrink-0 gap-[2px] bg-white pt-[2px] ${SONG}`}>
        <div className={`w-[148px] shrink-0 ${CELL}`} />
        <div className={`w-[78px] shrink-0 ${CELL}`}>层高:3.55m</div>
        <div className={`w-[98px] shrink-0 ${CELL}`}>底标高:-3.58m</div>
        <div className={`w-[47px] shrink-0 ${CELL}`}>0</div>
        <div className={`min-w-0 flex-1 overflow-hidden ${CELL}`}>格式:排数+直径+@+间距,不同直径用加号连接,例如2C12@200表示2排钢筋</div>
        <div className={`w-[70px] shrink-0 ${CELL}`}>781.4 FPS</div>
      </div>

      <Taskbar />

      <RebarDialog />

      {/* red marker rings */}
      <svg viewBox="0 0 276 150" className="pointer-events-none absolute top-[125px] left-[489px] h-[150px] w-[276px]" aria-hidden="true">
        <ellipse cx="138" cy="75" rx="134" ry="71" fill="none" stroke="#f00" strokeWidth="8" />
      </svg>
      <svg viewBox="0 0 430 88" className="pointer-events-none absolute top-[177px] left-[829px] h-[88px] w-[430px]" aria-hidden="true">
        <ellipse cx="215" cy="44" rx="211" ry="40" fill="none" stroke="#f00" strokeWidth="8" />
      </svg>

      <div className="absolute -top-[28px] left-[884px] flex size-12 items-end justify-center rounded-full border-2 border-[#ddd] bg-[#3dbd5c] pb-[2px] text-[13px] leading-[18px] font-bold text-white shadow-md">76</div>
      <SogouBar />
    </div>
  );
};

export default App;
